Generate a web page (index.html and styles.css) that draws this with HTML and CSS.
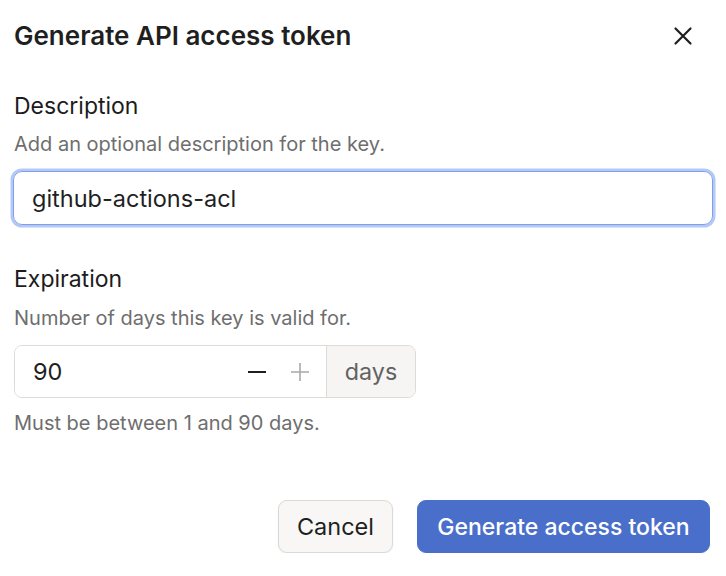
FILE: index.html
```html
<!DOCTYPE html>
<html lang="en">
<head>
<meta charset="utf-8">
<title>Generate API access token</title>
<link rel="stylesheet" href="styles.css">
</head>
<body>
<div class="dialog">
  <div class="header">
    <h1 class="title">Generate API access token</h1>
    <button class="close" aria-label="Close">
      <svg width="20" height="20" viewBox="0 0 20 20"><path d="M2.5 2.5 L17.5 17.5 M17.5 2.5 L2.5 17.5" stroke="#1f1f1f" stroke-width="2.2" stroke-linecap="round" fill="none"/></svg>
    </button>
  </div>

  <div class="field first">
    <div class="label">Description</div>
    <div class="help">Add an optional description for the key.</div>
    <div class="text-input focused">github-actions-acl</div>
  </div>

  <div class="field second">
    <div class="label">Expiration</div>
    <div class="help">Number of days this key is valid for.</div>
    <div class="number-group">
      <div class="number-input">
        <span class="value">90</span>
        <span class="steppers">
          <svg class="step minus" width="20" height="20" viewBox="0 0 20 20"><path d="M1 10 H19" stroke="#1f1f1f" stroke-width="2.2" fill="none"/></svg>
          <svg class="step plus" width="20" height="20" viewBox="0 0 20 20"><path d="M1 10 H19 M10 1 V19" stroke="#a9a9a9" stroke-width="1.6" fill="none"/></svg>
        </span>
      </div>
      <div class="addon">days</div>
    </div>
    <div class="help after">Must be between 1 and 90 days.</div>
  </div>

  <div class="footer">
    <button class="btn secondary">Cancel</button>
    <button class="btn primary">Generate access token</button>
  </div>
</div>
</body>
</html>
```

FILE: styles.css
```css
* { box-sizing: border-box; }
html, body { margin: 0; padding: 0; background: #ffffff; }
body {
  font-family: Inter, "Noto Sans", sans-serif;
  color: #1f1f1f;
}
.dialog {
  width: 726px;
  padding: 20px 15px 0 14px;
}
.header {
  display: flex;
  align-items: center;
  justify-content: space-between;
  height: 32px;
}
.title {
  margin: 0;
  font-size: 26px;
  font-weight: 600;
  line-height: 32px;
  color: #1f1f1f;
}
.close {
  border: 0;
  background: transparent;
  padding: 0;
  width: 20px;
  height: 20px;
  margin-right: 18px;
  display: flex;
}
.field.first { margin-top: 40px; }
.field.second { margin-top: 40px; }
.label {
  font-size: 23px;
  font-weight: 400;
  line-height: 28px;
  color: #1c1c1c;
}
.help {
  margin-top: 11px;
  font-size: 20px;
  line-height: 26px;
  color: #6e6e6e;
}
.field.second .help { margin-top: 12px; }
.help.after { margin-top: 22px; }
.text-input {
  margin-top: 14px;
  height: 54px;
  border: 1.5px solid #7f9fea;
  border-radius: 9px;
  box-shadow: 0 0 0 2.5px #b3c8f6;
  padding: 0 18px;
  display: flex;
  align-items: center;
  font-size: 23.5px;
  color: #1f1f1f;
  margin-left: -1px;
  margin-right: -2px;
}
.number-group {
  margin-top: 14px;
  width: 402px;
  height: 53px;
  display: flex;
  border: 1px solid #dedbd6;
  border-radius: 8px;
  overflow: hidden;
}
.number-input {
  flex: 1;
  display: flex;
  align-items: center;
  justify-content: space-between;
  padding: 0 16px 0 18px;
  background: #ffffff;
}
.value {
  font-size: 23.5px;
  color: #1f1f1f;
}
.steppers {
  display: flex;
  align-items: center;
  gap: 23px;
}
.step { display: block; }
.addon {
  width: 89px;
  border-left: 1px solid #dedbd6;
  background: #f6f5f3;
  display: flex;
  align-items: center;
  justify-content: center;
  font-size: 23.3px;
  color: #626262;
}
.footer {
  margin-top: 64px;
  display: flex;
  justify-content: flex-end;
  gap: 24px;
  padding-right: 1px;
}
.btn {
  height: 53px;
  border-radius: 9px;
  font-family: Inter, "Noto Sans", sans-serif;
  padding: 0;
  cursor: pointer;
}
.btn.secondary {
  width: 115px;
  font-size: 23.5px;
  font-weight: 400;
  background: #f8f7f5;
  border: 1px solid #dcd9d4;
  color: #1f1f1f;
  box-shadow: 0 1px 2px rgba(0,0,0,0.06);
}
.btn.primary {
  width: 293px;
  font-size: 23px;
  font-weight: 500;
  background: #4a6fcb;
  border: 1px solid #4a6fcb;
  color: #ffffff;
}
```
